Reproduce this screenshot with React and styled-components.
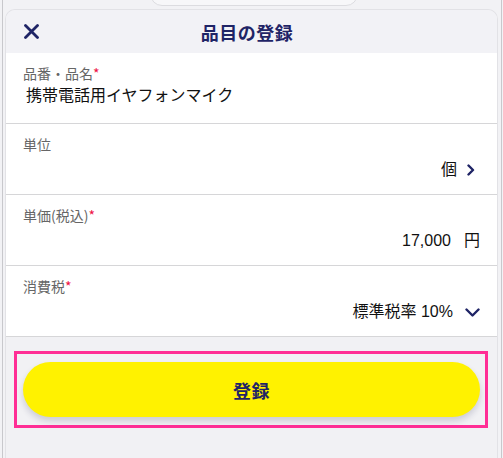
import React from "react";
import styled, { createGlobalStyle } from "styled-components";

const Global = createGlobalStyle`
  html, body { margin: 0; padding: 0; }
  body {
    width: 503px;
    height: 458px;
    overflow: hidden;
    background: #f2f2f5;
    font-family: "Noto Sans CJK JP", "Liberation Sans", sans-serif;
  }
`;

const navy = "#1f2466";

const Frame = styled.div`
  position: relative;
  width: 500px;
  height: 458px;
  box-sizing: border-box;
  margin-left: 2px;
  padding: 9px 3px 0 2px;
  background: #f2f2f5;
  border-left: 1px solid #c8c8cc;
  border-right: 1px solid #c8c8cc;
  overflow: hidden;
  display: flex;
  flex-direction: column;
`;

const BehindCard = styled.div`
  position: absolute;
  left: 147px;
  top: -12px;
  width: 206px;
  height: 16px;
  background: #f7f7f9;
  border: 1px solid #dcdce0;
  border-radius: 0 0 12px 12px;
`;

const Sheet = styled.div`
  flex: 1;
  display: flex;
  flex-direction: column;
  border: 1px solid #e2e2e6;
  border-bottom: none;
  border-radius: 10px 10px 0 0;
  background: #f2f2f5;
  overflow: hidden;
`;

const Header = styled.header`
  height: 43px;
  display: grid;
  grid-template-columns: 40px 1fr 40px;
  align-items: center;
  padding: 0 24px 0 15px;
  background: #f2f2f6;
`;

const CloseBtn = styled.button`
  width: 20px;
  height: 20px;
  padding: 0;
  border: none;
  background: none;
  display: flex;
  align-items: center;
  justify-content: center;
`;

const Title = styled.h1`
  margin: 0;
  text-align: center;
  font-size: 18px;
  font-weight: 700;
  color: ${navy};
  letter-spacing: 0.5px;
  line-height: 24px;
`;

const Form = styled.div`
  background: #fff;
  display: flex;
  flex-direction: column;
`;

const Row = styled.div`
  height: 71px;
  box-sizing: border-box;
  border-bottom: 1px solid #d6d6d8;
  padding: 11px 17px 0 17px;
  display: flex;
  flex-direction: column;
`;

const Label = styled.div`
  font-size: 14px;
  line-height: 18px;
  color: #666;
`;

const Req = styled.span`
  color: #ee1144;
`;

const Value = styled.div`
  display: flex;
  align-items: center;
  justify-content: ${(p) => (p.$align === "left" ? "flex-start" : "flex-end")};
  gap: ${(p) => p.$gap || 0}px;
  margin-top: ${(p) => p.$mt}px;
  padding-left: ${(p) => (p.$align === "left" ? 3 : 0)}px;
  font-size: 16px;
  line-height: 24px;
  color: #111;
  font-family: "Liberation Sans", "Noto Sans CJK JP", sans-serif;
`;

const Icon = styled.svg`
  display: block;
  margin-right: ${(p) => p.$mr || 0}px;
`;

const Footer = styled.div`
  flex: 1;
  padding: 14px 9px 0 8px;
  background: #f1f1f4;
`;

const Highlight = styled.div`
  border: 3px solid #ff2e95;
  padding: 8px 5px 8px 6px;
`;

const Submit = styled.button`
  display: block;
  width: 100%;
  height: 55px;
  border: none;
  border-radius: 28px;
  background: #fff200;
  color: ${navy};
  font-size: 18px;
  font-weight: 700;
  font-family: "Noto Sans CJK JP", sans-serif;
  box-shadow: 0 4px 6px rgba(40, 40, 80, 0.18);
  letter-spacing: 0.5px;
`;

export default function App() {
  return (
    <>
      <Global />
      <Frame>
        <BehindCard />
        <Sheet>
          <Header>
            <CloseBtn aria-label="閉じる">
              <Icon width="15" height="15" viewBox="0 0 15 15">
                <path d="M1.5 1.5 L13.5 13.5 M13.5 1.5 L1.5 13.5" stroke={navy} strokeWidth="2.8" strokeLinecap="round" />
              </Icon>
            </CloseBtn>
            <Title>品目の登録</Title>
            <span />
          </Header>
          <Form>
            <Row>
              <Label>品番・品名<Req>*</Req></Label>
              <Value $align="left" $mt={2}>携帯電話用イヤフォンマイク</Value>
            </Row>
            <Row>
              <Label>単位</Label>
              <Value $mt={5} $gap={10}>
                個
                <Icon width="8" height="12" viewBox="0 0 8 12" $mr={5}>
                  <path d="M1.5 1.5 L6 6 L1.5 10.5" fill="none" stroke={navy} strokeWidth="2.4" strokeLinecap="round" strokeLinejoin="round" />
                </Icon>
              </Value>
            </Row>
            <Row>
              <Label>単価(税込)<Req>*</Req></Label>
              <Value $mt={5} $gap={13}>
                <span>17,000</span>
                <span>円</span>
              </Value>
            </Row>
            <Row>
              <Label>消費税<Req>*</Req></Label>
              <Value $mt={5} $gap={12}>
                <span>標準税率 10%</span>
                <Icon width="15" height="9" viewBox="0 0 15 9">
                  <path d="M1.5 1.5 L7.5 7.5 L13.5 1.5" fill="none" stroke={navy} strokeWidth="2.4" strokeLinecap="round" strokeLinejoin="round" />
                </Icon>
              </Value>
            </Row>
          </Form>
          <Footer>
            <Highlight>
              <Submit>登録</Submit>
            </Highlight>
          </Footer>
        </Sheet>
      </Frame>
    </>
  );
}
